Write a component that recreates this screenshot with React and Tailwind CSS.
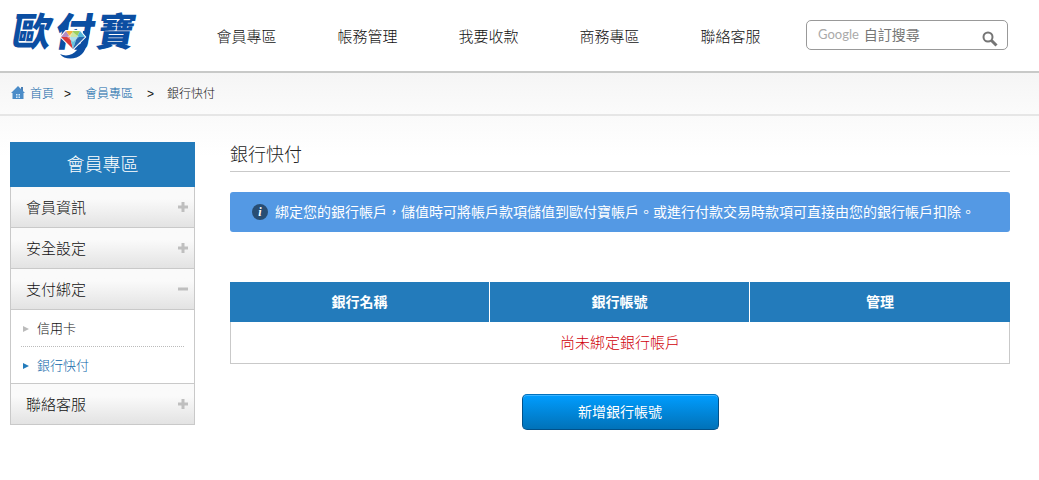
// File: src/App.jsx
const navItems = ["會員專區", "帳務管理", "我要收款", "商務專區", "聯絡客服"];

const sideMenu = [
  { label: "會員資訊" },
  { label: "安全設定" },
  {
    label: "支付綁定",
    children: [{ label: "信用卡" }, { label: "銀行快付", active: true }],
  },
  { label: "聯絡客服" },
];

function Logo() {
  return (
    <a href="#" aria-label="歐付寶" className="block shrink-0">
      <svg width="136" height="71" viewBox="0 -8 136 71">
        <g
          transform="skewX(-10)"
          fontSize="39"
          fontWeight="900"
          fill="#0b4ea2"
          fontFamily="'Noto Sans CJK TC', sans-serif"
        >
          <text x="8" y="38">歐</text>
          <text x="51" y="38">付</text>
          <text x="92" y="38">寶</text>
        </g>
        <path d="M51 46c6 3 13 1 17-4 4-5 5-12 6-19h7c-2 9-3 18-8 23-6 6-18 6-22 0z" fill="#0b4ea2" />
        <path d="M52 29l5-6h14l5 6-12 12z" fill="#fff" stroke="#fff" strokeWidth="2" />
        <path d="M52 29l5-6 4 6z" fill="#b58ac0" />
        <path d="M57 23h7l-3 6z" fill="#f6b23c" />
        <path d="M64 23h7l-3 6h-7z" fill="#9fcf5d" />
        <path d="M71 23l5 6h-8z" fill="#56b7d9" />
        <path d="M52 29h9l3 12z" fill="#d83a3a" />
        <path d="M61 29h7l-4 12z" fill="#67c4dc" />
        <path d="M68 29h8L64 41z" fill="#2867ad" />
        <path d="M58 29l6-5 6 5-6 5z" fill="#fff" opacity="0.45" />
      </svg>
    </a>
  );
}

function SearchBox() {
  return (
    <form className="mb-[2px] flex h-[30px] w-[202px] shrink-0 items-center rounded-[5px] border border-[#999] bg-white pl-[11px] pr-[9px] font-normal">
      <label htmlFor="q" className="font-['Lato'] text-[13px] text-[#aaa]">
        Google
      </label>
      <input
        id="q"
        type="text"
        placeholder="自訂搜尋"
        className="ml-[5px] w-0 flex-1 bg-transparent text-sm text-[#555] outline-none placeholder:text-[#777] placeholder:opacity-100"
      />
      <button type="button" aria-label="搜尋" className="mt-2">
        <svg width="16" height="16" viewBox="0 0 16 16" fill="none" stroke="#757575">
          <circle cx="6" cy="6" r="4.5" strokeWidth="2" />
          <path d="M9.5 9.5l5 5" strokeWidth="3" />
        </svg>
      </button>
    </form>
  );
}

function Header() {
  return (
    <header className="flex h-[73px] items-center border-b-2 border-[#c8c9c8] bg-white pr-[31px] pl-[9px] shadow-[0_1px_3px_#ddd]">
      <Logo />
      <nav className="ml-[41px] mr-[15px] grid flex-1 grid-cols-5 pt-1 text-center text-[15px] text-[#111]">
        {navItems.map((item) => (
          <a key={item} href="#" className="whitespace-nowrap">
            {item}
          </a>
        ))}
      </nav>
      <SearchBox />
    </header>
  );
}

function Breadcrumb() {
  return (
    <nav className="flex h-[43px] items-center border-b-2 border-[#e6e6e6] bg-linear-to-b from-[#f5f5f5] to-[#fbfbfb] pl-[11px] text-xs text-[#111]">
      <a href="#" className="flex items-center gap-[5px] text-[#0c65a8]">
        <svg width="14" height="14" viewBox="0 0 14 14" className="mb-[2px]">
          <path d="M10 1h2v4h-2z" fill="#4a7fb5" />
          <path d="M7 0l7 7h-1.5v6h-11V7H0z" fill="#4b8cc8" />
          <path d="M5 8h4v4H5z" fill="#d5e8f7" />
          <path d="M7 8v4M5 10h4" stroke="#4b94d2" />
        </svg>
        首頁
      </a>
      <span className="ml-[10px]">&gt;</span>
      <a href="#" className="ml-[14px] text-[#0c65a8]">會員專區</a>
      <span className="ml-[14px]">&gt;</span>
      <span className="ml-[13px]">銀行快付</span>
    </nav>
  );
}

function Sidebar() {
  return (
    <aside className="w-[185px] shrink-0">
      <h2 className="flex h-[45px] items-center justify-center bg-[#237bbb] text-lg text-white">
        會員專區
      </h2>
      <ul className="border-x border-[#c9c9c9] text-[15px] text-[#111]">
        {sideMenu.map((item) => (
          <li key={item.label}>
            <button
              type="button"
              className="flex h-[41px] w-full items-center justify-between border-b border-[#c9c9c9] bg-linear-to-b from-[#fafafa] from-30% to-[#e3e3e3] pt-[2px] pl-[15px] pr-[6px]"
            >
              {item.label}
              <svg width="10" height="10" viewBox="0 0 10 10" stroke="#bfbfbf" strokeWidth="3" className="mb-[2px]">
                <path d={item.children ? "M0 5h10" : "M0 5h10M5 0v10"} />
              </svg>
            </button>
            {item.children && (
              <ul className="border-b border-[#c9c9c9] bg-white px-[10px] text-[13px]">
                {item.children.map((child) => (
                  <li key={child.label} className="border-b border-dotted border-[#bbb] last:border-b-0">
                    <a
                      href="#"
                      className={
                        child.active
                          ? "flex h-9 items-center gap-2 pt-[2px] pl-[2px] text-[#0c65a8]"
                          : "flex h-9 items-center gap-2 pt-[2px] pl-[2px]"
                      }
                    >
                      <svg width="6" height="6" viewBox="0 0 6 6" fill={child.active ? "#237bbb" : "#bbb"}>
                        <path d="M0 0l6 3-6 3z" />
                      </svg>
                      {child.label}
                    </a>
                  </li>
                ))}
              </ul>
            )}
          </li>
        ))}
      </ul>
    </aside>
  );
}

function BankTable() {
  return (
    <table className="mt-[50px] w-full table-fixed border-separate border-spacing-0 text-center">
      <thead>
        <tr className="h-10 bg-[#237bbb] text-sm text-white">
          <th className="border-r border-white font-bold">銀行名稱</th>
          <th className="border-r border-white font-bold">銀行帳號</th>
          <th className="font-bold">管理</th>
        </tr>
      </thead>
      <tbody>
        <tr className="h-[42px] text-[15px] text-[#d00008]">
          <td colSpan={3} className="border border-t-0 border-[#c9c9c9] pt-[2px]">
            尚未綁定銀行帳戶
          </td>
        </tr>
      </tbody>
    </table>
  );
}

export default function App() {
  return (
    <div
      className="min-h-screen bg-white font-['Liberation_Sans','Noto_Sans_CJK_TC',sans-serif] font-light"
      lang="zh-Hant"
    >
      <Header />
      <Breadcrumb />
      <div className="bg-linear-to-b from-[#fafafa] to-white to-[40px]">
        <div className="flex gap-[35px] pt-[26px] pr-[29px] pb-10 pl-[10px]">
          <Sidebar />
          <main className="min-w-0 flex-1">
            <h1 className="border-b border-[#c9c9c9] pt-[1px] pb-1 text-lg leading-6 font-light text-[#222]">銀行快付</h1>
            <p className="mt-5 flex h-10 items-center gap-[7px] rounded-[3px] bg-[#5499e4] pl-[22px] text-sm font-normal text-white">
              <span className="flex size-4 shrink-0 items-center justify-center rounded-full bg-[#284d73] font-['Liberation_Serif',serif] text-xs font-bold italic">
                i
              </span>
              綁定您的銀行帳戶，儲值時可將帳戶款項儲值到歐付寶帳戶。或進行付款交易時款項可直接由您的銀行帳戶扣除。
            </p>
            <BankTable />
            <button
              type="button"
              className="mx-auto mt-[30px] block h-9 w-[197px] rounded-[5px] border border-[#01518a] border-t-[#0272bd] bg-linear-to-b from-[#009dff] to-[#0172b8] text-sm font-normal text-white shadow-[inset_0_1px_0_#3db4ff]"
            >
              新增銀行帳號
            </button>
          </main>
        </div>
      </div>
    </div>
  );
}
